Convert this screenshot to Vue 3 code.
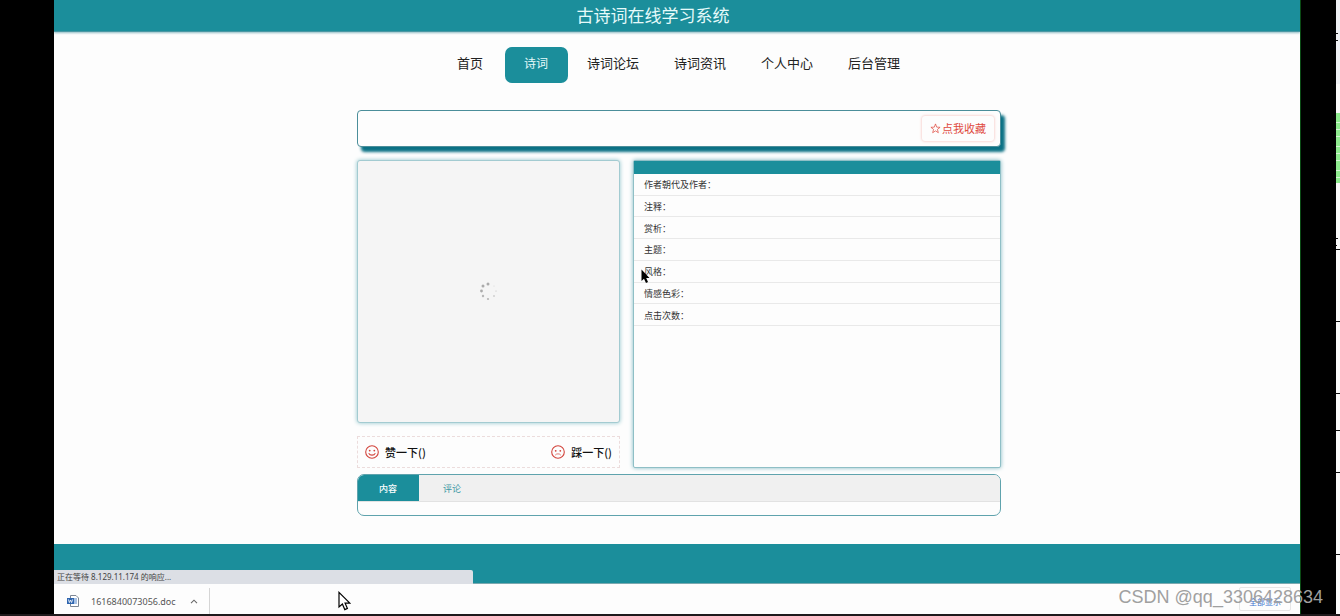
<script setup>
const navItems = [
  { label: '首页' },
  { label: '诗词', active: true },
  { label: '诗词论坛' },
  { label: '诗词资讯' },
  { label: '个人中心' },
  { label: '后台管理' },
]
const fields = ['作者朝代及作者：', '注释：', '赏析：', '主题：', '风格：', '情感色彩：', '点击次数：']
const dots = [
  { x: 8, y: 2, r: 1.5, o: 0.7 },
  { x: 3, y: 4, r: 1.5, o: 0.7 },
  { x: 1.5, y: 9, r: 1.4, o: 0.7 },
  { x: 3, y: 14, r: 1.2, o: 0.6 },
  { x: 8, y: 17, r: 1.1, o: 0.6 },
  { x: 14, y: 14, r: 0.8, o: 0.6 },
  { x: 16, y: 9, r: 0.6, o: 0.5 },
  { x: 14, y: 4, r: 0.5, o: 0.3 },
]
const ticks = [
  { y: 33, w: 2 },
  { y: 40, w: 2 },
  { y: 238, w: 2 },
  { y: 245, w: 1 },
  { y: 249, w: 4 },
  { y: 321, w: 4 },
  { y: 393, w: 4 },
  { y: 430, w: 4 },
  { y: 472, w: 4 },
  { y: 554, w: 4 },
]
</script>

<template>
  <div class="frame">
    <div class="screen">
      <header class="top">古诗词在线学习系统</header>

      <nav class="nav">
        <a v-for="item in navItems" :key="item.label" href="#" :class="{ active: item.active }">{{ item.label }}</a>
      </nav>

      <main class="content">
        <section class="title-box">
          <button class="favorite" type="button">
            <svg width="11" height="11" viewBox="0 0 12 12" fill="none" stroke="#e04a3f" stroke-width="0.8" stroke-linejoin="round">
              <path d="M6 1 7.3 4.5 11 4.7 8.1 7 9.1 10.6 6 8.6 2.9 10.6 3.9 7 1 4.7 4.7 4.5Z" />
            </svg>
            <span>点我收藏</span>
          </button>
        </section>

        <div class="columns">
          <div class="left">
            <div class="cover">
              <svg width="18" height="19" viewBox="0 0 18 19" fill="#8c8c8c">
                <circle v-for="(d, i) in dots" :key="i" :cx="d.x" :cy="d.y" :r="d.r" :opacity="d.o" />
              </svg>
            </div>
            <div class="votes">
              <button type="button">
                <svg width="14" height="14" viewBox="0 0 14 14" fill="none" stroke="#d2443c" stroke-width="1.1" stroke-linecap="round">
                  <circle cx="7" cy="7" r="6.3" />
                  <path d="M4 8.6C4.8 10.6 9.2 10.6 10 8.6" />
                  <g fill="#d2443c" stroke="none"><circle cx="4.7" cy="5.6" r="0.9" /><circle cx="9.3" cy="5.6" r="0.9" /></g>
                </svg>
                <span>赞一下()</span>
              </button>
              <button type="button">
                <svg width="14" height="14" viewBox="0 0 14 14" fill="none" stroke="#d2443c" stroke-width="1.1" stroke-linecap="round">
                  <circle cx="7" cy="7" r="6.3" />
                  <path d="M4.4 9.8C5.2 8.4 8.8 8.4 9.6 9.8" stroke-width="0.7" />
                  <g fill="#d2443c" stroke="none"><circle cx="4.7" cy="5.8" r="0.9" /><circle cx="9.3" cy="5.8" r="0.9" /></g>
                </svg>
                <span>踩一下()</span>
              </button>
            </div>
          </div>

          <div class="info">
            <div class="info-head"></div>
            <ul class="fields">
              <li v-for="f in fields" :key="f">{{ f }}</li>
            </ul>
            <svg class="pointer-dark" width="9" height="15" viewBox="0 0 9 15" fill="#000">
              <path d="M0.5 0.5V12L3 9.8 5 14 7 13 5.2 9H8.5Z" />
            </svg>
          </div>
        </div>

        <section class="tabs">
          <div class="tab-head">
            <button class="tab selected" type="button">内容</button>
            <button class="tab" type="button">评论</button>
          </div>
          <div class="tab-body"></div>
        </section>
      </main>

      <footer class="foot">
        <div class="status">正在等待 8.129.11.174 的响应...</div>
      </footer>

      <div class="downloads">
        <div class="file">
          <svg width="12" height="12" viewBox="0 0 12 12">
            <path d="M3.5 0.5H9L11.5 3V11.5H3.5Z" fill="#fff" stroke="#7d8794" />
            <path d="M6 4H10M6 6H10M6 8H10" stroke="#4f83c8" stroke-width="1" />
            <rect x="0" y="3" width="7" height="6" fill="#2f66b0" />
            <path d="M1.4 4.4 2.4 7.6 3.5 5 4.6 7.6 5.6 4.4" fill="none" stroke="#fff" stroke-width="0.8" />
          </svg>
          <span>1616840073056.doc</span>
          <button class="more" type="button" aria-label="更多">
            <svg width="8" height="5" viewBox="0 0 8 5" fill="none" stroke="#666" stroke-width="1.1"><path d="M1 4.2 4 1.2 7 4.2" /></svg>
          </button>
        </div>
        <button class="show-all" type="button">全部显示</button>
        <svg class="pointer-light" width="13" height="20" viewBox="0 0 13 20" fill="#fff" stroke="#000" stroke-width="1.2">
          <path d="M1 1.4V16L4.4 13 6.8 18.6 9.4 17.4 7.1 12.2H11.8Z" />
        </svg>
      </div>
    </div>

    <div class="gutter"></div>
    <div class="edge">
      <svg width="4" height="614" viewBox="0 0 4 614">
        <rect width="4" height="84" fill="#f0f1f5" />
        <rect y="113" width="4" height="70" fill="#90ec90" />
        <path d="M0 122.5H4M0 129.5H4M0 136.5H4M0 146.5H4M0 153.5H4M0 160.5H4M0 170.5H4M0 177.5H4" stroke="#d5f7d5" />
        <rect v-for="t in ticks" :key="t.y" :y="t.y" :width="t.w" height="1" fill="#111" />
      </svg>
    </div>
    <div class="watermark">CSDN @qq_3306428634</div>
  </div>
</template>

<style>
body {
  background: #000;
}
</style>

<style scoped>
.frame {
  position: relative;
  box-sizing: border-box;
  min-height: 100vh;
  display: grid;
  grid-template-columns: minmax(0, 1fr) 36px 4px;
  padding-left: 54px;
  border-bottom: 2px solid #1e1a1c;
  background: #000;
  font-family: "Noto Sans", "Noto Sans CJK SC", sans-serif;
}
button {
  margin: 0;
  padding: 0;
  border: 0;
  background: none;
  font-family: inherit;
}
a {
  text-decoration: none;
}
.screen {
  display: flex;
  flex-direction: column;
  overflow: hidden;
  background: #fdfdfd;
}
.top {
  height: 31px;
  line-height: 30px;
  padding-right: 48px;
  text-align: center;
  color: #e6fafa;
  font-family: "Noto Sans CJK SC", sans-serif;
  font-size: 17px;
  background: #1b8e9b;
  border-bottom: 1px solid #4b98a4;
  box-shadow: 0 1px 2px #8fbcc4;
}
.nav {
  display: flex;
  justify-content: center;
  gap: 1px;
  padding: 15px 0 0 3px;
}
.nav a {
  height: 36px;
  line-height: 32px;
  padding: 0 17px;
  color: #222;
  font-family: "Noto Sans CJK SC", sans-serif;
  font-size: 13px;
}
.nav a.active {
  margin: 0 1px 0 4px;
  padding: 0 20px 0 19px;
  border-radius: 7px;
  background: #1b8e9b;
  color: #e6fafa;
  font-size: 12px;
}
.content {
  width: 52%;
  max-width: 644px;
  margin: 27px auto 28px;
  padding-left: 4px;
  font-family: "Noto Sans CJK SC", sans-serif;
}
.title-box {
  display: flex;
  justify-content: flex-end;
  padding: 5px 6px 5px 5px;
  border: 1px solid #4b8e9a;
  border-radius: 4px;
  box-shadow: 4px 5px 3px #0b7185;
  background: #fdfdfd;
}
.favorite {
  display: flex;
  align-items: center;
  gap: 1px;
  height: 25px;
  padding: 0 8px 1px;
  border-radius: 3px;
  box-shadow: 0 0 3px #f2b5b0;
  color: #e04a3f;
  font-size: 11px;
}
.columns {
  display: flex;
  gap: 13px;
  margin-top: 13px;
}
.left {
  flex: 263;
}
.cover {
  display: flex;
  align-items: center;
  justify-content: center;
  box-sizing: border-box;
  aspect-ratio: 1;
  border: 1px solid #a3cbd1;
  border-radius: 3px;
  box-shadow: 0 0 4px #8fc4cc;
  background: #f5f5f5;
}
.votes {
  display: flex;
  justify-content: space-between;
  margin-top: 13px;
  padding: 0 7px;
  border: 1px dashed #ecdcdc;
}
.votes button {
  display: flex;
  align-items: center;
  gap: 6px;
  height: 30px;
  color: #111;
  font-size: 11px;
  font-weight: 500;
}
.info {
  position: relative;
  flex: 366;
  border: 1px solid #8fbfc6;
  border-radius: 2px;
  box-shadow: 0 0 4px #7fb9c2;
  background: #fdfdfd;
}
.info-head {
  height: 13px;
  background: #1b8e9b;
}
.fields {
  display: grid;
  grid-auto-rows: 1fr;
  height: 152px;
  margin: 0;
  padding: 0;
  list-style: none;
}
.fields li {
  display: flex;
  align-items: center;
  padding: 1px 0 0 10px;
  border-bottom: 1px solid #e9e9e9;
  color: #333;
  font-size: 9px;
}
.pointer-dark {
  position: absolute;
  left: 7px;
  top: 108px;
}
.tabs {
  margin-top: 6px;
  border: 1px solid #5fa3ad;
  border-radius: 7px;
  overflow: hidden;
}
.tab-head {
  display: flex;
  background: #f0f0f0;
  border-bottom: 1px solid #e2e2e2;
}
.tab {
  height: 26px;
  padding: 0 24px;
  color: #3a97a3;
  font-size: 9px;
}
.tab.selected {
  padding: 0 22px 0 21px;
  background: #1b8e9b;
  color: #fff;
  font-weight: 500;
}
.tab-body {
  height: 13px;
}
.foot {
  position: relative;
  height: 39px;
  margin-top: auto;
  border-bottom: 1px solid #7aa9b0;
  background: #1b8e9b;
}
.status {
  position: absolute;
  left: 0;
  bottom: -1px;
  box-sizing: border-box;
  width: 419px;
  height: 14px;
  line-height: 13px;
  padding-left: 3px;
  border-top-right-radius: 2px;
  background: #dcdfe5;
  color: #444;
  font-size: 8px;
}
.downloads {
  position: relative;
  display: flex;
  justify-content: space-between;
  height: 30px;
  background: #fdfdfd;
}
.file {
  display: flex;
  align-items: center;
  margin-top: 4px;
  padding: 0 11px 0 13px;
  border-right: 1px solid #d5d5d5;
  color: #555;
  font-size: 9px;
}
.file span {
  margin: 0 14px 0 12px;
}
.more {
  display: flex;
}
.show-all {
  height: 24px;
  margin: 3px 9px 0 0;
  padding: 4px 9px 0;
  border: 1px solid #e6e6e6;
  border-radius: 2px;
  color: #3d74cf;
  font-size: 8px;
}
.pointer-light {
  position: absolute;
  left: 284px;
  top: 7px;
}
.gutter {
  border-left: 1px solid #0a4a14;
  box-sizing: border-box;
}
.edge {
  background: #fafafa;
}
.edge svg {
  display: block;
}
.watermark {
  position: absolute;
  right: 17px;
  bottom: 6px;
  color: #a0a0a0;
  font-family: "Liberation Sans", Arial, sans-serif;
  font-size: 18px;
  line-height: 22px;
}
</style>
